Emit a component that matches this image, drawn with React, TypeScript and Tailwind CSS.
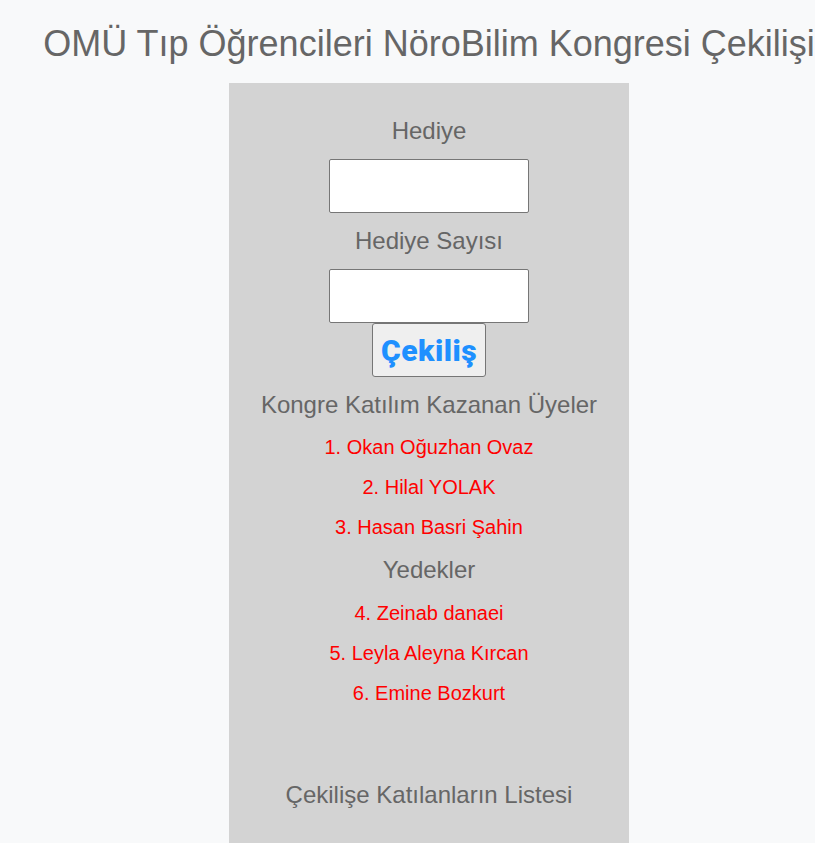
import React from 'react';

const winners = ['1. Okan Oğuzhan Ovaz', '2. Hilal YOLAK', '3. Hasan Basri Şahin'];
const reserves = ['4. Zeinab danaei', '5. Leyla Aleyna Kırcan', '6. Emine Bozkurt'];

const Label: React.FC<{ text: string; className?: string }> = ({ text, className = '' }) => (
  <div className={`h-[28px] flex items-center justify-center text-[24px] text-[#666] ${className}`}>{text}</div>
);

const Name: React.FC<{ text: string }> = ({ text }) => (
  <div className="h-[40px] flex items-center justify-center text-[20px] text-[#ff0000]">{text}</div>
);

const App: React.FC = () => {
  return (
    <div className="w-full min-h-screen overflow-hidden bg-[#f8f9fa] font-['Liberation_Sans',Arial,sans-serif]">
      <div className="w-[858px] flex flex-col items-center">
        <h1 className="pt-[23px] text-[36px] leading-[41px] text-[#666] whitespace-nowrap">
          OMÜ Tıp Öğrencileri NöroBilim Kongresi Çekilişi
        </h1>
        <div className="mt-[19px] w-[400px] min-h-[800px] bg-[#d3d3d3] flex flex-col items-center pt-[34px] pb-10">
          <Label text="Hediye" />
          <input type="text" className="mt-[14px] w-[200px] h-[54px] bg-white border border-[#767676] rounded-[2px]" />
          <Label text="Hediye Sayısı" className="mt-[14px]" />
          <input type="number" className="mt-[14px] w-[200px] h-[54px] bg-white border border-[#767676] rounded-[2px]" />
          <button className="w-[114px] h-[54px] bg-[#efefef] border border-[#767676] rounded-[3px] font-['Roboto',sans-serif] font-black text-[30px] leading-none pt-[2px] text-[#1e90ff] tracking-[0.5px]">
            Çekiliş
          </button>
          <Label text="Kongre Katılım Kazanan Üyeler" className="mt-[14px]" />
          <div className="mt-[8px] flex flex-col">
            {winners.map((n) => (
              <Name key={n} text={n} />
            ))}
          </div>
          <Label text="Yedekler" className="mt-[9px]" />
          <div className="mt-[9px] flex flex-col">
            {reserves.map((n) => (
              <Name key={n} text={n} />
            ))}
          </div>
          <Label text="Çekilişe Katılanların Listesi" className="mt-[68px]" />
        </div>
      </div>
    </div>
  );
};

export default App;
